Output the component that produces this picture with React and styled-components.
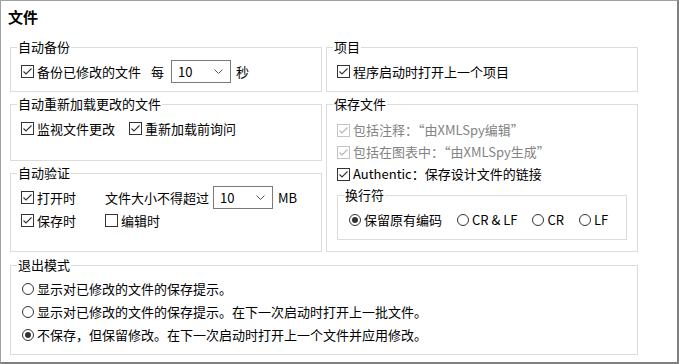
import React from 'react'
import styled, { createGlobalStyle } from 'styled-components'

const GlobalStyle = createGlobalStyle`
    html, body {
        margin: 0;
        padding: 0;
        background: #fff;
    }
    body {
        font-family: "Noto Sans CJK SC", "Noto Sans", sans-serif;
        font-size: 13px;
        color: #000;
    }
`;

const Frame = styled.div`
    width: 679px;
    height: 364px;
    box-sizing: border-box;
    background: #fff;
    border-top: 1px solid #a0a0a0;
    border-left: 1px solid #a0a0a0;
    border-right: 2px solid #808080;
    border-bottom: 2px solid #808080;
    padding: 6px 39px 0 9px;
`;

const Title = styled.div`
    font-size: 15px;
    font-weight: bold;
    line-height: 20px;
    height: 20px;
    margin: 0 0 13px -2px;
`;

const Columns = styled.div`
    display: grid;
    grid-template-columns: 312px 312px;
    column-gap: 4px;
    margin-bottom: 6px;
`;

const Column = styled.div`
    display: flex;
    flex-direction: column;
    gap: 5px;
`;

const Group = styled.fieldset`
    margin: ${p => p.$mt || 0}px 0 0 0;
    padding: 0;
    min-width: 0;
    border: 1px solid #dcdcdc;
    box-sizing: border-box;
    height: ${p => p.$h}px;
`;

const Legend = styled.legend`
    margin-left: 6px;
    padding: 0 1px;
    height: 14px;
    line-height: 14px;
    font-size: 13px;
`;

const Body = styled.div`
    padding: ${p => p.$pt || 6}px 10px 0 10px;
`;

const Row = styled.div`
    display: flex;
    align-items: center;
    height: ${p => p.$h || 23}px;
    gap: ${p => p.$gap || 0}px;
`;

const Grid = styled.div`
    display: grid;
    grid-template-columns: 84px auto;
    grid-auto-rows: 23px;
    align-items: center;
    justify-content: start;
`;

const Cell = styled.div`
    display: flex;
    align-items: center;
`;

const Text = styled.span`
    margin-left: ${p => p.$ml || 0}px;
    white-space: nowrap;
    color: ${p => (p.$dim ? '#838383' : '#000')};
    line-height: 16px;
`;

const Item = styled.label`
    display: inline-flex;
    align-items: center;
    gap: 3px;
    margin-right: ${p => p.$mr || 0}px;
    white-space: nowrap;
`;

const Box = styled.span`
    flex: none;
    width: 13px;
    height: 13px;
    box-sizing: border-box;
    border: 1px solid ${p => (p.$dim ? '#c4c4c4' : '#333')};
    color: ${p => (p.$dim ? '#b4b4b4' : '#333')};
    background: #fff;
    display: inline-flex;
`;

const Circle = styled.span`
    flex: none;
    width: 12px;
    height: 12px;
    margin-left: 1px;
    box-sizing: border-box;
    border: 1px solid #333;
    border-radius: 50%;
    background: #fff;
    display: inline-flex;
    align-items: center;
    justify-content: center;
    &::after {
        content: '';
        width: 6px;
        height: 6px;
        border-radius: 50%;
        background: #333;
        display: ${p => (p.$on ? 'block' : 'none')};
    }
`;

const SelectBox = styled.div`
    flex: none;
    width: 60px;
    height: 23px;
    box-sizing: border-box;
    border: 1px solid #7a7a7a;
    background: #fff;
    display: flex;
    align-items: center;
    justify-content: space-between;
    padding: 0 7px 0 6px;
    margin-left: ${p => p.$ml || 0}px;
    line-height: 16px;
`;

function Check({ label, checked = true, dim, mr }) {
    return (
        <Item $mr={mr}>
            <Box $dim={dim}>
                {checked && (
                    <svg width="11" height="11" viewBox="0 0 11 11">
                        <polyline points="1.5,5.5 4,8 9.5,2.5" fill="none" stroke="currentColor" strokeWidth="1.1" />
                    </svg>
                )}
            </Box>
            <Text $dim={dim}>{label}</Text>
        </Item>
    )
}

function Radio({ label, on, mr }) {
    return (
        <Item $mr={mr}>
            <Circle $on={on} />
            <Text>{label}</Text>
        </Item>
    )
}

function Select({ value, ml }) {
    return (
        <SelectBox $ml={ml}>
            <span>{value}</span>
            <svg width="9" height="5" viewBox="0 0 9 5">
                <polyline points="0.5,0.5 4.5,4.5 8.5,0.5" fill="none" stroke="#555" strokeWidth="1" />
            </svg>
        </SelectBox>
    )
}

export default function App() {
    return (
        <>
            <GlobalStyle />
            <Frame>
                <Title>文件</Title>
                <Columns>
                    <Column>
                        <Group $h={52}>
                            <Legend>自动备份</Legend>
                            <Body>
                                <Row>
                                    <Check label="备份已修改的文件" />
                                    <Text $ml={10}>每</Text>
                                    <Select value="10" ml={7} />
                                    <Text $ml={5}>秒</Text>
                                </Row>
                            </Body>
                        </Group>
                        <Group $h={64}>
                            <Legend>自动重新加载更改的文件</Legend>
                            <Body>
                                <Row $gap={14}>
                                    <Check label="监视文件更改" />
                                    <Check label="重新加载前询问" />
                                </Row>
                            </Body>
                        </Group>
                        <Group $h={86}>
                            <Legend>自动验证</Legend>
                            <Body>
                                <Grid>
                                    <Check label="打开时" />
                                    <Cell>
                                        <Text>文件大小不得超过</Text>
                                        <Select value="10" ml={4} />
                                        <Text $ml={5}>MB</Text>
                                    </Cell>
                                    <Check label="保存时" />
                                    <Check label="编辑时" checked={false} />
                                </Grid>
                            </Body>
                        </Group>
                    </Column>
                    <Column>
                        <Group $h={52}>
                            <Legend>项目</Legend>
                            <Body>
                                <Row>
                                    <Check label="程序启动时打开上一个项目" />
                                </Row>
                            </Body>
                        </Group>
                        <Group $h={155}>
                            <Legend>保存文件</Legend>
                            <Body $pt={8}>
                                <Row $h={22}>
                                    <Check dim label="包括注释：“由XMLSpy编辑”" />
                                </Row>
                                <Row $h={22}>
                                    <Check dim label="包括在图表中：“由XMLSpy生成”" />
                                </Row>
                                <Row $h={22}>
                                    <Check label="Authentic：保存设计文件的链接" />
                                </Row>
                                <Group $h={52} $mt={3}>
                                    <Legend>换行符</Legend>
                                    <Body>
                                        <Row>
                                            <Radio on label="保留原有编码" mr={14} />
                                            <Radio label="CR & LF" mr={14} />
                                            <Radio label="CR" mr={14} />
                                            <Radio label="LF" />
                                        </Row>
                                    </Body>
                                </Group>
                            </Body>
                        </Group>
                    </Column>
                </Columns>
                <Group $h={97}>
                    <Legend>退出模式</Legend>
                    <Body $pt={5}>
                        <Row>
                            <Radio label="显示对已修改的文件的保存提示。" />
                        </Row>
                        <Row>
                            <Radio label="显示对已修改的文件的保存提示。在下一次启动时打开上一批文件。" />
                        </Row>
                        <Row>
                            <Radio on label="不保存，但保留修改。在下一次启动时打开上一个文件并应用修改。" />
                        </Row>
                    </Body>
                </Group>
            </Frame>
        </>
    )
}
